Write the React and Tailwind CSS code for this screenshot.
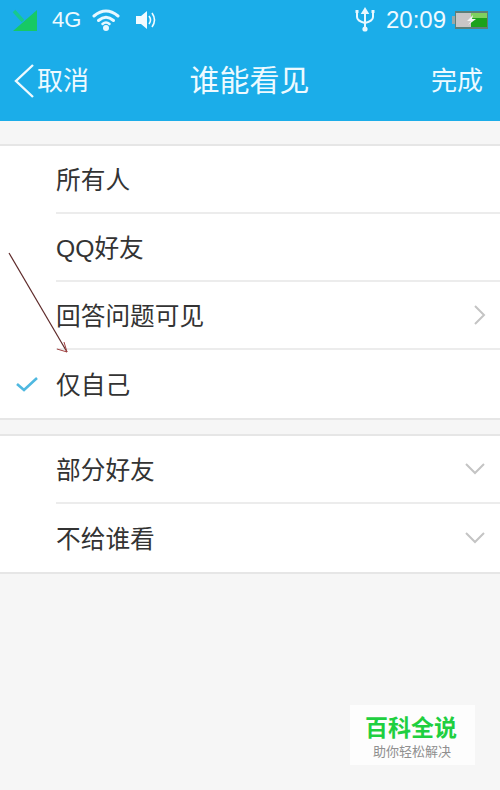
import React from "react";

const font = { fontFamily: '"Liberation Sans", "Noto Sans CJK SC", sans-serif' };

function Signal() {
  return (
    <svg width="26" height="23" viewBox="0 0 26 23" className="mr-[14px]">
      <path d="M1 22 L25 1 L25 22 Z" fill="#17c964" />
      <path d="M2 2 L11 12" fill="none" stroke="#17c98f" strokeWidth="3.5" />
    </svg>
  );
}

function Wifi() {
  return (
    <svg width="28" height="24" viewBox="0 0 28 24" className="ml-[11px]" fill="none" stroke="#e8f8ff" strokeLinecap="round">
      <path d="M2 8 Q14 -2 26 8" strokeWidth="3" />
      <path d="M6.5 12.5 Q14 6 21.5 12.5" strokeWidth="3" />
      <path d="M10.5 16 Q14 13 17.5 16" strokeWidth="2.5" />
      <circle cx="14" cy="20" r="3" fill="#e8f8ff" stroke="none" />
    </svg>
  );
}

function Speaker() {
  return (
    <svg width="24" height="20" viewBox="0 0 24 20" className="ml-[15px]">
      <path d="M1 6 H6 L12 1 V19 L6 14 H1 Z" fill="#f2fbff" />
      <path d="M14 6 Q17 10 14 14" fill="none" stroke="#f2fbff" strokeWidth="1.6" />
      <path d="M17 3 Q22 10 17 17" fill="none" stroke="#f2fbff" strokeWidth="1.6" />
    </svg>
  );
}

function Usb() {
  return (
    <svg width="22" height="26" viewBox="0 0 22 26" fill="none" stroke="#e8f8ff" strokeWidth="2" className="mr-[10px]">
      <path d="M11 2 V21" />
      <path d="M11 2 L8.5 6 H13.5 Z" fill="#e8f8ff" />
      <path d="M3 5 V10 Q3 14 11 16" />
      <path d="M19 5 V10 Q19 14 11 16" />
      <rect x="1.5" y="3" width="3" height="3" fill="#e8f8ff" stroke="none" />
      <rect x="17.5" y="3" width="3" height="3" fill="#e8f8ff" stroke="none" />
      <circle cx="11" cy="22" r="2.6" fill="#e8f8ff" stroke="none" />
    </svg>
  );
}

function Battery() {
  return (
    <svg width="36" height="20" viewBox="0 0 36 20" className="ml-[6px]">
      <rect x="0" y="6" width="3" height="8" fill="#9aa8a8" />
      <rect x="3" y="1" width="33" height="18" fill="#5d7f78" />
      <rect x="4" y="3" width="15" height="14" fill="#c9c6c6" />
      <rect x="19" y="3" width="16" height="14" fill="#1ba21b" />
      <rect x="19" y="3" width="16" height="5" fill="#7fd05f" />
      <path d="M21 5 L15 11 H19 L16 15 L24 9 H20 Z" fill="#f4f4f4" />
    </svg>
  );
}

function Row({ label, icon, last, check }) {
  return (
    <div className="flex h-[68px]">
      <div className="w-[56px] flex items-center pl-[16px]">
        {check && (
          <svg width="22" height="16" viewBox="0 0 22 16" fill="none" stroke="#4fb8e0" strokeWidth="2.6">
            <path d="M1 8 L8 14 L21 2" />
          </svg>
        )}
      </div>
      <div className={`flex-1 flex items-center justify-between ${last ? "" : "border-b-2 border-[#ececec]"}`}>
        <span className="text-[24.7px] text-[#333333] leading-none mt-[5px]">{label}</span>
        {icon}
      </div>
    </div>
  );
}

const chevronRight = (
  <svg width="14" height="20" viewBox="0 0 14 20" fill="none" stroke="#c4c4c4" strokeWidth="2" className="mr-[13px]">
    <path d="M2 1 L11 10 L2 19" />
  </svg>
);

const chevronDown = (
  <svg width="20" height="12" viewBox="0 0 20 12" fill="none" stroke="#c4c4c4" strokeWidth="2" className="mr-[15px]">
    <path d="M1 1 L10 10 L19 1" />
  </svg>
);

export default function App() {
  return (
    <div className="relative w-[500px] h-[790px] overflow-hidden bg-[#f6f6f6]" style={font}>
      <div className="h-[121px] bg-[#1bade9] text-[#eefaff] flex flex-col">
        <div className="h-[40px] flex items-center pl-[12px] pr-[12px]">
          <Signal />
          <span className="text-[22px] leading-none">4G</span>
          <Wifi />
          <Speaker />
          <div className="flex-1" />
          <Usb />
          <span className="text-[24px] leading-none">20:09</span>
          <Battery />
        </div>
        <div className="flex-1 flex items-center justify-between pl-[14px] pr-[17px]">
          <div className="flex items-center w-[120px]">
            <svg width="20" height="34" viewBox="0 0 20 34" fill="none" stroke="#eefaff" strokeWidth="2.4" className="mr-[3px]">
              <path d="M19 1 L2 17 L19 33" />
            </svg>
            <span className="text-[26px] leading-none">取消</span>
          </div>
          <span className="text-[30px] leading-none ml-[2px]">谁能看见</span>
          <span className="w-[120px] text-right text-[26px] leading-none">完成</span>
        </div>
      </div>

      <div className="mt-[23px] bg-white border-y-2 border-[#e6e6e6]">
        <Row label="所有人" />
        <Row label="QQ好友" />
        <Row label="回答问题可见" icon={chevronRight} />
        <Row label="仅自己" check last />
      </div>

      <div className="mt-[14px] bg-white border-y-2 border-[#e6e6e6]">
        <Row label="部分好友" icon={chevronDown} />
        <Row label="不给谁看" icon={chevronDown} last />
      </div>

      {/* hand drawn annotation arrow */}
      <svg width="80" height="110" viewBox="0 0 80 110" fill="none" className="absolute left-0 top-[248px]">
        <path d="M9 5 L67 104" stroke="#5e2a2a" strokeWidth="1.2" />
        <path d="M57 101 L67 104 L64 94" stroke="#a04040" strokeWidth="1" />
      </svg>

      {/* watermark */}
      <div className="absolute left-[350px] top-[705px] w-[125px] h-[60px] bg-[#fdfdfd] flex flex-col items-center pt-[12px]">
        <span className="text-[23px] font-bold text-[#1fcf40] leading-none mr-[3px]">百科全说</span>
        <span className="text-[13px] text-[#8f8f8f] leading-none mt-[5px] mr-[1px]">助你轻松解决</span>
      </div>
    </div>
  );
}
